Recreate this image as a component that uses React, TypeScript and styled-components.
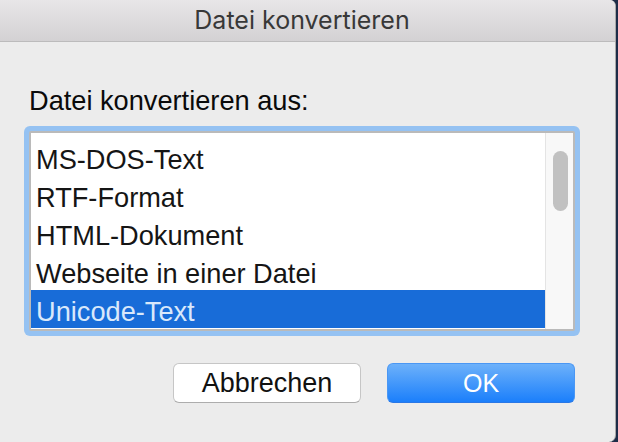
import React from "react";
import styled, { createGlobalStyle } from "styled-components";

const Global = createGlobalStyle`
  html, body { margin: 0; padding: 0; }
  body {
    background: #1d2c48;
    font-family: "Liberation Sans", Arial, sans-serif;
    overflow: hidden;
  }
`;

const Window = styled.div`
  box-sizing: border-box;
  width: 616px;
  height: 442px;
  background: #ececec;
  border-right: 1px solid #a9a9a9;
  border-top-right-radius: 6px;
  border-bottom-right-radius: 7px;
  overflow: hidden;
  display: flex;
  flex-direction: column;
`;

const TitleBar = styled.div`
  height: 41px;
  border-bottom: 1px solid #bcbbbc;
  background: linear-gradient(#e8e6e8, #d3d1d3);
  display: flex;
  align-items: center;
  justify-content: center;
  padding-right: 11px;
`;

const Title = styled.div`
  font-family: Inter, "Liberation Sans", sans-serif;
  font-size: 25px;
  line-height: 41px;
  color: #383838;
`;

const Body = styled.div`
  padding: 45px 40px 0 29px;
  display: flex;
  flex-direction: column;
`;

const Label = styled.div`
  font-size: 27.2px;
  line-height: 27px;
  color: #0a0a0a;
`;

const ListBox = styled.div`
  margin-top: 17px;
  box-sizing: border-box;
  width: 546px;
  height: 200px;
  border: 2px solid #bababa;
  border-radius: 2px;
  box-shadow: 0 0 0 5px #95c2f2;
  background: #fff;
  display: flex;
`;

const Items = styled.div`
  flex: 1;
  padding-top: 5px;
  display: flex;
  flex-direction: column;
`;

const Item = styled.div<{ $selected?: boolean }>`
  height: 38px;
  box-sizing: border-box;
  padding: 6px 0 0 5px;
  font-size: 27.2px;
  line-height: 32px;
  white-space: nowrap;
  color: ${(p) => (p.$selected ? "#d9e8fb" : "#151515")};
  background: ${(p) => (p.$selected ? "#186cd8" : "transparent")};
`;

const ScrollTrack = styled.div`
  width: 28px;
  border-left: 1px solid #e4e4e4;
  background: #f8f8f8;
  padding: 18px 0 0 7px;
  box-sizing: border-box;
`;

const Thumb = styled.div`
  width: 15px;
  height: 60px;
  border-radius: 8px;
  background: #c1c1c1;
`;

const Buttons = styled.div`
  margin-top: 32px;
  display: flex;
  justify-content: flex-end;
  gap: 26px;
`;

const Button = styled.button<{ $primary?: boolean }>`
  box-sizing: border-box;
  width: 188px;
  height: 40px;
  border-radius: 6px;
  font-family: "Liberation Sans", Arial, sans-serif;
  font-size: ${(p) => (p.$primary ? "25px" : "27px")};
  line-height: 38px;
  padding: 0;
  cursor: default;
  color: ${(p) => (p.$primary ? "#ffffff" : "#111111")};
  background: ${(p) =>
    p.$primary ? "linear-gradient(#6db1fa, #1b7ffb)" : "#ffffff"};
  border: 1px solid ${(p) => (p.$primary ? "#4a97f4" : "#c6c6c6")};
  border-bottom-color: ${(p) => (p.$primary ? "#2a78e6" : "#adadad")};
`;

const items = [
  "MS-DOS-Text",
  "RTF-Format",
  "HTML-Dokument",
  "Webseite in einer Datei",
  "Unicode-Text",
];

export default function App() {
  return (
    <>
      <Global />
      <Window>
        <TitleBar>
          <Title>Datei konvertieren</Title>
        </TitleBar>
        <Body>
          <Label>Datei konvertieren aus:</Label>
          <ListBox>
            <Items>
              {items.map((t, i) => (
                <Item key={t} $selected={i === items.length - 1}>
                  {t}
                </Item>
              ))}
            </Items>
            <ScrollTrack>
              <Thumb />
            </ScrollTrack>
          </ListBox>
          <Buttons>
            <Button>Abbrechen</Button>
            <Button $primary>OK</Button>
          </Buttons>
        </Body>
      </Window>
    </>
  );
}
